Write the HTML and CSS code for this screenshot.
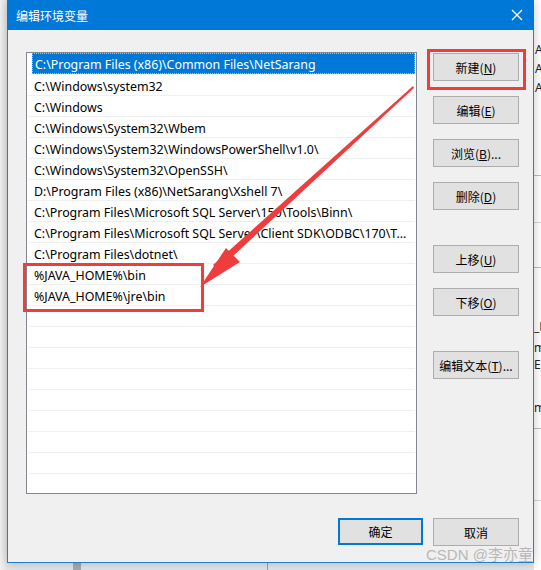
FILE: index.html
```html
<!DOCTYPE html>
<html lang="zh-CN">
<head>
<meta charset="utf-8">
<title>编辑环境变量</title>
<link rel="stylesheet" href="styles.css">
</head>
<body>
<div class="desktop">
  <div class="bgwin">
    <span class="bgtext t1">A</span>
    <span class="bgtext t2">A</span>
    <span class="bgtext t3">A</span>
    <span class="bgline l1"></span>
    <span class="bgline l2"></span>
    <span class="bgline l3"></span>
    <span class="bgtext t4">_N</span>
    <span class="bgtext t5">m</span>
    <span class="bgtext t6">E;</span>
    <span class="bgtext t7">m</span>
    <span class="bgline l4"></span>
    <span class="bgline l5"></span>
  </div>
  <div class="taskbit"></div>
  <div class="taskline"></div>

  <div class="dialog">
    <div class="titlebar">
      <span class="title">编辑环境变量</span>
      <svg class="close" width="12" height="12" viewBox="0 0 12 12"><path d="M1 1 L11 11 M11 1 L1 11" stroke="#fff" stroke-width="1.3" fill="none"/></svg>
    </div>
    <div class="content">
      <div class="list">
        <div class="row sel"><span class="focus">C:\Program Files (x86)\Common Files\NetSarang</span></div>
        <div class="row">C:\Windows\system32</div>
        <div class="row">C:\Windows</div>
        <div class="row">C:\Windows\System32\Wbem</div>
        <div class="row">C:\Windows\System32\WindowsPowerShell\v1.0\</div>
        <div class="row">C:\Windows\System32\OpenSSH\</div>
        <div class="row">D:\Program Files (x86)\NetSarang\Xshell 7\</div>
        <div class="row">C:\Program Files\Microsoft SQL Server\150\Tools\Binn\</div>
        <div class="row">C:\Program Files\Microsoft SQL Server\Client SDK\ODBC\170\T...</div>
        <div class="row">C:\Program Files\dotnet\</div>
        <div class="row">%JAVA_HOME%\bin</div>
        <div class="row">%JAVA_HOME%\jre\bin</div>
        <div class="row"></div>
        <div class="row"></div>
        <div class="row"></div>
        <div class="row"></div>
        <div class="row"></div>
        <div class="row"></div>
        <div class="row"></div>
        <div class="row"></div>
        <div class="row"></div>
      </div>
      <div class="buttons">
        <button class="btn">新建(<u>N</u>)</button>
        <button class="btn">编辑(<u>E</u>)</button>
        <button class="btn">浏览(<u>B</u>)...</button>
        <button class="btn">删除(<u>D</u>)</button>
        <button class="btn gap">上移(<u>U</u>)</button>
        <button class="btn">下移(<u>O</u>)</button>
        <button class="btn gap">编辑文本(<u>T</u>)...</button>
      </div>
    </div>
    <div class="footer">
      <button class="btn default">确定</button>
      <button class="btn">取消</button>
    </div>
  </div>

  <svg class="annot" width="541" height="570" viewBox="0 0 541 570">
    <rect x="428.5" y="50.5" width="96" height="38" fill="none" stroke="#ef3d3d" stroke-width="3"/>
    <rect x="24.5" y="264.5" width="178" height="46" fill="none" stroke="#ef3d3d" stroke-width="3"/>
    <polygon points="413,86 414,88 218,270 213,265" fill="#ef3d3d"/>
    <polygon points="200,287 226,248 240,262" fill="#ef3d3d"/>
  </svg>
  <div class="watermark">CSDN @李亦童</div>
</div>
</body>
</html>
```

FILE: styles.css
```css
* { box-sizing: border-box; }
html, body { margin: 0; padding: 0; }
body {
  width: 541px;
  height: 570px;
  overflow: hidden;
  background: #e8e8e8;
  font-family: "Noto Sans", "Noto Sans CJK SC", sans-serif;
}
.desktop {
  position: relative;
  width: 541px;
  height: 570px;
  background: linear-gradient(to right, #f2f2f2 0, #e4e4e4 7px);
}
.bgwin {
  position: absolute;
  left: 534px;
  top: 0;
  width: 7px;
  height: 570px;
  background: #ffffff;
  overflow: hidden;
}
.bgtext {
  position: absolute;
  left: 1px;
  font-size: 12px;
  color: #222;
  line-height: 14px;
}
.t1 { top: 43px; }
.t2 { top: 62px; }
.t3 { top: 81px; }
.t4 { top: 320px; left: 0; }
.t5 { top: 341px; left: 0; }
.t6 { top: 358px; left: 0; }
.t7 { top: 401px; left: 0; }
.bgline { position: absolute; left: 0; width: 7px; height: 1px; background: #d6d6d6; }
.l1 { top: 175px; background: #bdbdbd; }
.l2 { top: 222px; }
.l3 { top: 267px; background: #bdbdbd; }
.l4 { top: 428px; background: #bdbdbd; }
.l5 { top: 500px; }
.taskbit {
  position: absolute;
  left: 73px;
  top: 563px;
  width: 8px;
  height: 7px;
  background: #a9a9a9;
}
.taskline {
  position: absolute;
  left: 267px;
  top: 563px;
  width: 1px;
  height: 7px;
  background: #a0a0a0;
}
.dialog {
  position: absolute;
  left: 7px;
  top: 0;
  width: 527px;
  height: 563px;
  background: #f0f0f0;
  border: 1px solid #1a82d6;
  border-top: none;
  box-shadow: 0 0 10px rgba(0, 0, 0, 0.22);
  display: flex;
  flex-direction: column;
}
.titlebar {
  height: 30px;
  margin: 0 -1px;
  background: #0078d7;
  color: #fff;
  display: flex;
  align-items: center;
  justify-content: space-between;
  padding: 0 11px 0 9px;
  flex: none;
}
.title {
  font-family: "Noto Sans CJK SC", sans-serif;
  font-size: 12px;
}
.close { display: block; }
.content {
  display: flex;
  padding: 22px 14px 0 18px;
  gap: 16px;
}
.list {
  width: 391px;
  height: 442px;
  border: 1px solid #828790;
  background: #fff;
  padding: 0 1px 0 1px;
  overflow: hidden;
  flex: none;
}
.row {
  height: 21px;
  border-top: 1px solid #f0f0f0;
  padding: 2px 0 0 6px;
  font-size: 12.4px;
  line-height: 19px;
  color: #000;
  white-space: nowrap;
  overflow: hidden;
}
.row:first-child { border-top-color: transparent; }
.row.sel {
  margin-left: 4px;
  padding: 2px 0 0 2px;
  background: #0078d7;
  color: #fff;
  border: 1px dotted #f4b26a;
  line-height: 17px;
}
.buttons {
  display: flex;
  flex-direction: column;
  gap: 15px;
  padding-top: 1px;
}
.btn {
  width: 86px;
  height: 28px;
  background: #e1e1e1;
  border: 1px solid #adadad;
  font-family: "Noto Sans CJK SC", sans-serif;
  font-size: 12px;
  color: #000;
  padding: 0;
  display: flex;
  align-items: center;
  justify-content: center;
}
.btn u { text-decoration: underline; text-underline-offset: 1px; }
.btn.gap { margin-top: 20px; }
.footer {
  display: flex;
  justify-content: flex-end;
  gap: 10px;
  padding: 24px 14px 0 0;
}
.btn.default {
  width: 85px;
  height: 27px;
  border: 2px solid #0078d7;
}
.annot {
  position: absolute;
  left: 0;
  top: 0;
  pointer-events: none;
}
.watermark {
  position: absolute;
  left: 426px;
  top: 543px;
  font-family: "Liberation Sans", "Noto Sans CJK SC", sans-serif;
  font-size: 15px;
  color: #b8b8b8;
  white-space: nowrap;
}
```
